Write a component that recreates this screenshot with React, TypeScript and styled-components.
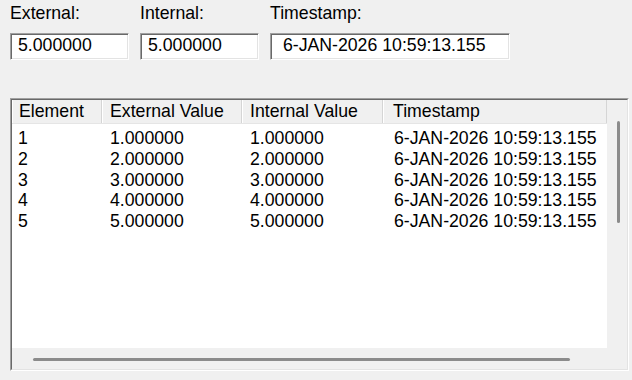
import styled, { createGlobalStyle } from 'styled-components';

const GlobalStyle = createGlobalStyle`
  html, body {
    margin: 0;
    padding: 0;
    background: #f0f0f0;
  }
  body {
    font-family: 'Liberation Sans', Arial, sans-serif;
    font-size: 17.7px;
    color: #000;
  }
`;

const Page = styled.div`
  width: 632px;
  height: 380px;
  box-sizing: border-box;
  padding: 3px 0 0 10px;
  display: flex;
  flex-direction: column;
`;

const FieldRow = styled.div`
  display: flex;
  gap: 11px;
`;

const Field = styled.div<{ $width: number }>`
  display: flex;
  flex-direction: column;
  gap: 9px;
  width: ${(p) => p.$width}px;
`;

const Label = styled.div`
  height: 21px;
  line-height: 21px;
`;

const ValueBox = styled.div`
  box-sizing: border-box;
  height: 27px;
  padding-left: 7px;
  line-height: 23px;
  white-space: pre;
  background: #fff;
  border: 1px solid;
  border-color: #a0a0a0 #fff #fff #a0a0a0;
  box-shadow: inset 1px 1px 0 #696969, inset -1px -1px 0 #e3e3e3;
`;

const Frame = styled.div`
  margin-top: 38px;
  width: 619px;
  height: 273px;
  box-sizing: border-box;
  border: 1px solid;
  border-color: #a0a0a0 #fff #fff #a0a0a0;
`;

const FrameInner = styled.div`
  height: 100%;
  box-sizing: border-box;
  border: 1px solid;
  border-color: #696969 #e3e3e3 #e3e3e3 #696969;
  display: grid;
  grid-template-columns: 595px 20px;
  grid-template-rows: 248px 21px;
`;

const List = styled.div`
  background: #fff;
  display: flex;
  flex-direction: column;
  overflow: hidden;
`;

const columns = '90px 140px 141px 224px';

const HeaderRow = styled.div`
  display: grid;
  grid-template-columns: ${columns};
  height: 24px;
  box-sizing: border-box;
  background: #f0f0f0;
  border-bottom: 1px solid #e5e5e5;
`;

const HeaderCell = styled.div<{ $pad: number }>`
  padding-left: ${(p) => p.$pad}px;
  line-height: 23px;
  white-space: nowrap;
  box-shadow: inset 1px 0 0 #fff, inset -1px 0 0 #d5d5d5;
`;

const Body = styled.div`
  padding-top: 4px;
`;

const Row = styled.div`
  display: grid;
  grid-template-columns: ${columns};
  line-height: 20.8px;
  height: 20.8px;
`;

const Cell = styled.div<{ $pad: number }>`
  padding-left: ${(p) => p.$pad}px;
  white-space: nowrap;
`;

const VTrack = styled.div`
  background: #f0f0f0;
  padding: 21px 0 0 10px;
`;

const VThumb = styled.div`
  width: 3px;
  height: 102px;
  border-radius: 2px;
  background: #8b8b8b;
`;

const HTrack = styled.div`
  background: #f0f0f0;
  padding: 10px 0 0 21px;
`;

const HThumb = styled.div`
  width: 537px;
  height: 3px;
  border-radius: 2px;
  background: #8b8b8b;
`;

const Corner = styled.div`
  background: #f0f0f0;
`;

const headers = [
  { title: 'Element', pad: 7 },
  { title: 'External Value', pad: 8 },
  { title: 'Internal Value', pad: 8 },
  { title: 'Timestamp', pad: 10 },
];

const pads = [6, 8, 8, 11];

const stamp = '6-JAN-2026 10:59:13.155';

const rows = [1, 2, 3, 4, 5].map((n) => [
  String(n),
  `${n}.000000`,
  `${n}.000000`,
  stamp,
]);

export default function App() {
  return (
    <Page>
      <GlobalStyle />
      <FieldRow>
        <Field $width={119}>
          <Label>External:</Label>
          <ValueBox>5.000000</ValueBox>
        </Field>
        <Field $width={119}>
          <Label>Internal:</Label>
          <ValueBox>5.000000</ValueBox>
        </Field>
        <Field $width={240}>
          <Label>Timestamp:</Label>
          <ValueBox>{' ' + stamp}</ValueBox>
        </Field>
      </FieldRow>

      <Frame>
        <FrameInner>
          <List>
            <HeaderRow>
              {headers.map((h) => (
                <HeaderCell key={h.title} $pad={h.pad}>
                  {h.title}
                </HeaderCell>
              ))}
            </HeaderRow>
            <Body>
              {rows.map((r) => (
                <Row key={r[0]}>
                  {r.map((v, i) => (
                    <Cell key={i} $pad={pads[i]}>
                      {v}
                    </Cell>
                  ))}
                </Row>
              ))}
            </Body>
          </List>
          <VTrack>
            <VThumb />
          </VTrack>
          <HTrack>
            <HThumb />
          </HTrack>
          <Corner />
        </FrameInner>
      </Frame>
    </Page>
  );
}
